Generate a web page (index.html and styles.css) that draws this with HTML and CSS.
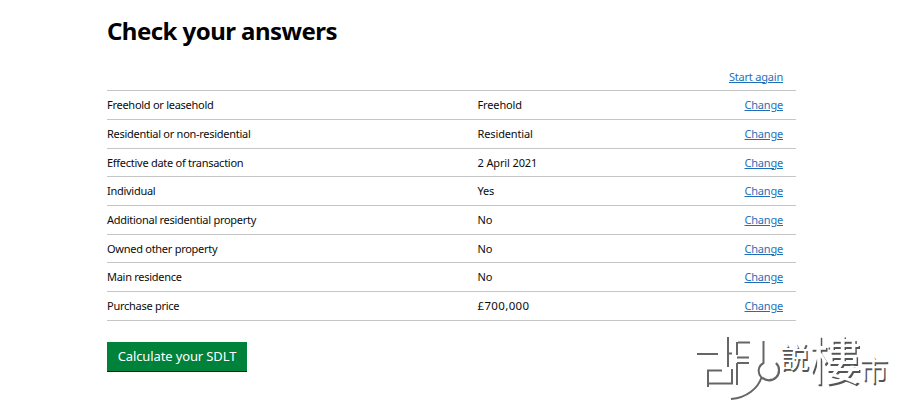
FILE: index.html
```
<!DOCTYPE html>
<html lang="en">
<head>
    <meta charset="UTF-8" />
    <meta name="viewport" content="width=device-width, initial-scale=1.0" />
    <title>Check your answers</title>
    <link rel="stylesheet" href="styles.css">
</head>
<body>
    <main class="container">
        <h1>Check your answers</h1>
        <div class="start-again"><a href="#">Start again</a></div>
        <dl class="answers">
            <div class="row">
                <dt>Freehold or leasehold</dt>
                <dd>Freehold</dd>
                <dd class="action"><a href="#">Change</a></dd>
            </div>
            <div class="row">
                <dt>Residential or non-residential</dt>
                <dd>Residential</dd>
                <dd class="action"><a href="#">Change</a></dd>
            </div>
            <div class="row">
                <dt>Effective date of transaction</dt>
                <dd>2 April 2021</dd>
                <dd class="action"><a href="#">Change</a></dd>
            </div>
            <div class="row">
                <dt>Individual</dt>
                <dd>Yes</dd>
                <dd class="action"><a href="#">Change</a></dd>
            </div>
            <div class="row">
                <dt>Additional residential property</dt>
                <dd>No</dd>
                <dd class="action"><a href="#">Change</a></dd>
            </div>
            <div class="row">
                <dt>Owned other property</dt>
                <dd>No</dd>
                <dd class="action"><a href="#">Change</a></dd>
            </div>
            <div class="row">
                <dt>Main residence</dt>
                <dd>No</dd>
                <dd class="action"><a href="#">Change</a></dd>
            </div>
            <div class="row">
                <dt>Purchase price</dt>
                <dd class="price">£700,000</dd>
                <dd class="action"><a href="#">Change</a></dd>
            </div>
        </dl>
        <button type="button" class="calculate">Calculate your SDLT</button>
    </main>
    <div class="watermark" lang="zh-Hant">
        <svg class="mark" width="84" height="72" viewBox="0 0 84 72">
            <path d="M1 24H22M32 7V37M32 23.5H36M12 57V40.5H26M12 53.5H36V39M42 12.5H54M41 12V25M41 27.5H53M41 33H53M41 33V55" />
            <path d="M67.5 11V33C62 36 61 43 65.5 47.5C62 58 51 68 35 69" />
            <path class="thick" d="M80 33A10 10 0 0 1 66 47.5" />
        </svg>
        <span class="say">説</span>
        <span class="house">樓</span>
        <span class="market">市</span>
    </div>
</body>
</html>
```
FILE: styles.css
```
* {
    box-sizing: border-box;
}
body {
    margin: 0;
    height: 411px;
    overflow: hidden;
    background-color: #fff;
    color: #0b0c0c;
    font-family: "Noto Sans", sans-serif;
    font-size: 11px;
}
.container {
    width: 688.5px;
    margin-left: 107px;
    padding-top: 14px;
}
h1 {
    margin: 0;
    font-size: 24px;
    line-height: 34px;
    font-weight: 700;
    letter-spacing: -0.55px;
    color: #000;
}
a {
    color: #1d70b8;
    letter-spacing: -0.2px;
    text-decoration: underline;
    text-underline-offset: 1px;
}

/* Answers list */
.start-again {
    margin-top: 20.5px;
    padding-right: 12.5px;
    line-height: 16px;
    text-align: right;
}
.answers {
    margin: 5.8px 0 0;
    border-top: 1px solid #c4c6c7;
}
.row {
    display: grid;
    grid-template-columns: 370.5px 1fr 100px;
    height: 28.7px;
    line-height: 27px;
    border-bottom: 1px solid #c4c6c7;
}
dt, dd {
    margin: 0;
}
dt {
    letter-spacing: -0.27px;
}
dd {
    letter-spacing: -0.13px;
}
.price {
    font-size: 11.5px;
    letter-spacing: 0.35px;
}
.action {
    padding-right: 12.5px;
    text-align: right;
}

/* Button */
.calculate {
    display: block;
    width: 140px;
    height: 30px;
    margin-top: 21.2px;
    padding: 0;
    border: none;
    border-bottom: 1px solid #002d18;
    background-color: #00823b;
    color: #fff;
    font-family: inherit;
    font-size: 13px;
    line-height: 28px;
    letter-spacing: -0.12px;
}

/* Watermark over the bottom right corner */
.watermark {
    position: absolute;
    left: 696px;
    top: 330px;
    display: flex;
    font-family: "Noto Sans CJK TC", sans-serif;
    color: #fff;
    text-shadow: 1.5px 1.5px 0.5px #555;
}
.mark {
    fill: none;
    stroke: #666;
    stroke-width: 2;
}
.mark .thick {
    stroke-width: 2.4;
}
.say {
    margin-top: 11px;
    font-size: 29px;
    line-height: 29px;
}
.house {
    margin-top: 2px;
    font-size: 52px;
    line-height: 52px;
}
.market {
    margin-top: 24px;
    margin-left: -2px;
    font-size: 29px;
    line-height: 29px;
}
```
